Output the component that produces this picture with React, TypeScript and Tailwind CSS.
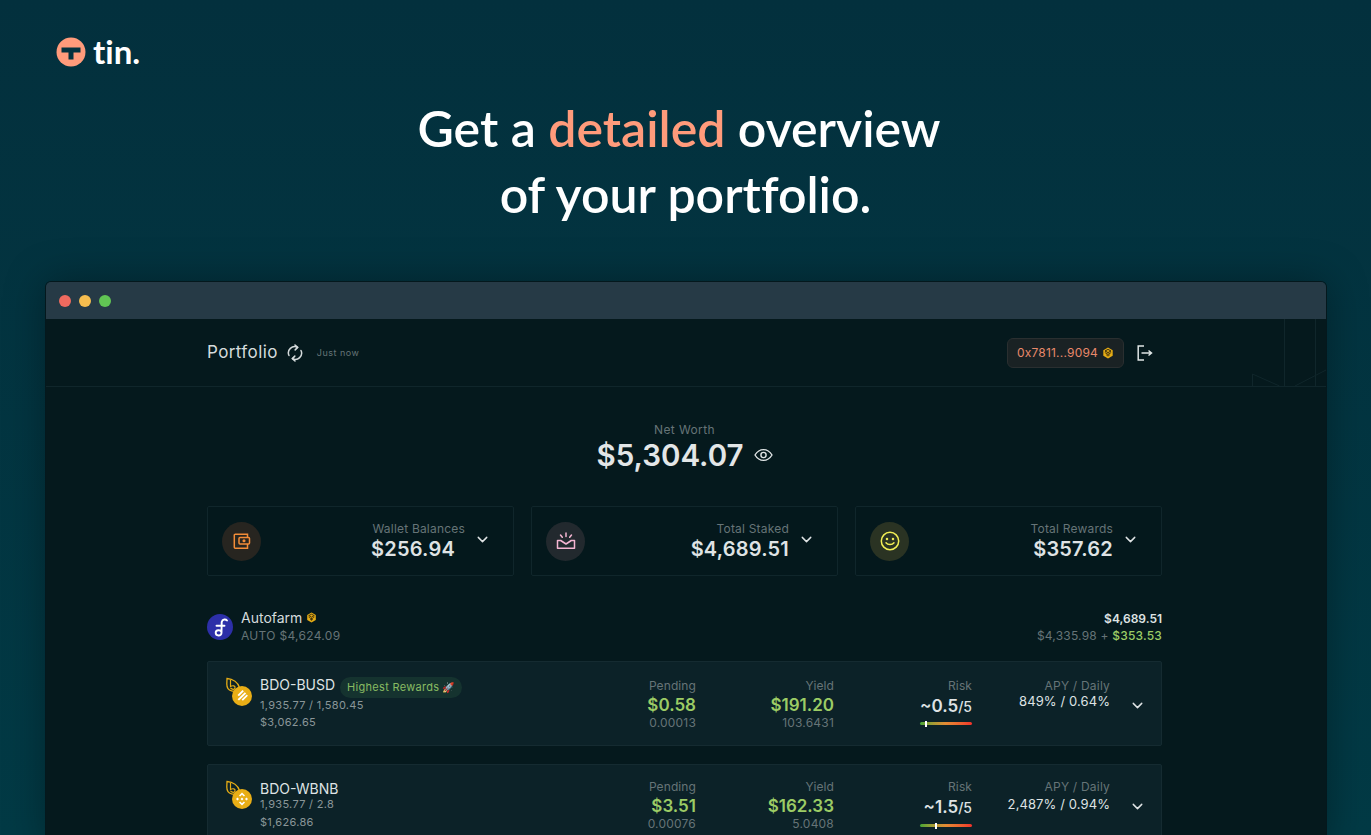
import { ChevronDown } from "lucide-react";

const inter = "font-['Inter',sans-serif]";

function Logo() {
  return (
    <div className="flex items-center gap-[7px]">
      <svg width="30" height="30" viewBox="0 0 30 30">
        <circle cx="15" cy="15" r="14.5" fill="#ff9b7b" />
        <path d="M5.5 10.5h19v5h-7v7h-5v-7h-7z" fill="#03323f" />
      </svg>
      <span className="font-['Lato',sans-serif] text-[33px] font-bold leading-none text-white [font-variant-ligatures:none]">tin.</span>
    </div>
  );
}

function BnbBadge({ size = 12 }: { size?: number }) {
  return (
    <svg width={size} height={size} viewBox="0 0 12 12" fill="none">
      <path d="M6 .6l4.7 2.7v5.4L6 11.4 1.3 8.7V3.3z" fill="#e5ac15" />
      <path d="M3 4l3-1.6L9 4 6 5.6zM6 6.4v3" stroke="#3a2c0a" strokeWidth="1" />
      <path d="M2.8 5.5L5 6.8v2M9.2 5.5L7 6.8v2" stroke="#3a2c0a" strokeWidth=".8" />
    </svg>
  );
}

function Refresh() {
  return (
    <svg width="16" height="18" viewBox="0 0 16 18" fill="none" stroke="#d5dbdc" strokeWidth="1.5" strokeLinecap="round" strokeLinejoin="round">
      <path d="M2 11.5A6.2 6.2 0 0 1 10.5 3.4" />
      <path d="M8 1l2.7 2.4L8.2 5.9" />
      <path d="M14 6.5A6.2 6.2 0 0 1 5.5 14.6" />
      <path d="M8 17l-2.7-2.4 2.5-2.5" />
    </svg>
  );
}

function Logout() {
  return (
    <svg width="16" height="16" viewBox="0 0 16 16" fill="none" stroke="#dfe5e5" strokeWidth="1.5">
      <path d="M7 1H1.2v14H7" />
      <path d="M4.5 8h10M11.5 5.5L14.5 8l-3 2.5" />
    </svg>
  );
}

function Eye() {
  return (
    <svg width="19" height="14" viewBox="0 0 19 14" fill="none" stroke="#dfe3e4" strokeWidth="1.4">
      <path d="M1 7c2.2-3.6 5-5.4 8.500-5.400S15.800 3.400 18 7c-2.200 3.600-5 5.400-8.500 5.400S3.200 10.600 1 7z" />
      <circle cx="9.500" cy="7" r="2.600" />
    </svg>
  );
}

function WalletIcon() {
  return (
    <svg width="18" height="18" viewBox="0 0 18 18" fill="none" stroke="#f28c38" strokeWidth="1.5">
      <path d="M14.500 5V2.200H2.200a.900.900 0 0 0-.900.900v12.200c0 .6.400 1 1 1h12.200V12" />
      <rect x="6" y="5.500" width="10.500" height="6.500" rx="1" />
      <circle cx="11" cy="8.700" r=".8" fill="#f28c38" />
    </svg>
  );
}

function StakeIcon() {
  return (
    <svg width="20" height="18" viewBox="0 0 20 18" fill="none" stroke="#f5b5d2" strokeWidth="1.500" strokeLinecap="round">
      <path d="M10 1v3.500M4.500 3l1.800 2.300M15.500 3l-1.800 2.300" />
      <path d="M1.500 8.500h3.200L10 12l5.300-3.500h3.200v7.700h-17z" strokeLinejoin="round" />
    </svg>
  );
}

function SmileIcon() {
  return (
    <svg width="20" height="20" viewBox="0 0 20 20" fill="none" stroke="#f1ee55" strokeWidth="1.500" strokeLinecap="round">
      <circle cx="10" cy="10" r="8.700" />
      <path d="M6 11.800c1.800 2.400 6.200 2.400 8 0" />
      <circle cx="7" cy="8" r=".5" fill="#f1ee55" />
      <circle cx="13" cy="8" r=".5" fill="#f1ee55" />
    </svg>
  );
}

function AutofarmLogo() {
  return (
    <svg width="26" height="26" viewBox="0 0 26 26">
      <circle cx="13" cy="13" r="13" fill="#2d2fa8" />
      <path d="M20 6.500c-1-1.300-4.500-1.800-5.300 1.500l-.2 11c-.3 3.400-5.800 3.300-5.800-.2 0-3.300 5-3.500 5.800-.5M9.500 11.700h8" fill="none" stroke="#fff" strokeWidth="1.900" strokeLinecap="round" />
    </svg>
  );
}

function FarmIcon({ coin }: { coin: "busd" | "bnb" }) {
  return (
    <div className="relative h-[30px] w-[28px] shrink-0">
      <svg width="28" height="30" viewBox="0 0 28 30" fill="none">
        <path d="M2 1.500C8 2 13 5.500 14.500 10.500c-1.800 3-5 4-8 3.300C2.800 13 1.800 10 1.800 7z" stroke="#e5ac15" strokeWidth="1.300" />
        <path d="M5.500 3v6.500c2.500-1.500 5-.5 4.500 1.500s-3 1.500-4.500 0" stroke="#e5ac15" strokeWidth="1.200" />
      </svg>
      <svg className="absolute bottom-[1px] right-[1px]" width="20" height="20" viewBox="0 0 20 20">
        <circle cx="10" cy="10" r="10" fill="#e9ae16" />
        {coin === "busd" ? (
          <path d="M10.500 4l1.400 1.300-5 5L5.500 9zM12.800 6.200l1.400 1.400-7.200 7-1.400-1.400zM14.800 8.500l1.100 1.300-5 5-1.300-1.400z" fill="#fff" />
        ) : (
          <path d="M10 3.500l3 3-1.100 1.100L10 5.700 8.100 7.600 7 6.500zM5.500 8.500L7 10l-1.500 1.500L4 10zM14.500 8.500L16 10l-1.500 1.500L13 10zM10 8.500l1.500 1.500L10 11.500 8.500 10zM7 13.500l1.100-1.100 1.900 1.900 1.900-1.900 1.100 1.100-3 3z" fill="#fff" />
        )}
      </svg>
    </div>
  );
}

function SummaryCard({ label, value, tint, icon, valueClass = "" }: { label: string; value: string; tint: string; icon: React.ReactNode; valueClass?: string }) {
  return (
    <div className="flex h-[70px] items-center rounded-[2px] border border-[#10262b] bg-[#04181c] pl-[14px] pr-[22px]">
      <div className={`flex h-[39px] w-[39px] items-center justify-center rounded-full ${tint}`}>{icon}</div>
      <div className="ml-auto mr-[9px] text-right">
        <div className="text-[12px] leading-[15px] tracking-[0.2px] text-[#667477]">{label}</div>
        <div className={`text-[20px] font-semibold leading-[26px] tracking-[0.2px] text-[#dfe3e4] ${valueClass}`}>{value}</div>
      </div>
      <ChevronDown size={17} strokeWidth={2} className="mb-[4px] text-[#dfe3e4]" />
    </div>
  );
}

function Metric({ label, value, sub, width }: { label: string; value: string; sub: string; width: string }) {
  return (
    <div className={`${width} text-right`}>
      <div className="text-[12px] leading-[14px] tracking-[0.1px] text-[#667477]">{label}</div>
      <div className="mt-[1px] text-[17px] font-semibold leading-[22px] text-[#9ccc65]">{value}</div>
      <div className="text-[12px] leading-[14px] tracking-[0.2px] text-[#667477]">{sub}</div>
    </div>
  );
}

type Farm = {
  name: string;
  coin: "busd" | "bnb";
  amounts: string;
  usd: string;
  pending: string;
  pendingSub: string;
  yieldValue: string;
  yieldSub: string;
  risk: string;
  riskPos: number;
  apy: string;
  badge?: boolean;
};

const farms: Farm[] = [
  { name: "BDO-BUSD", coin: "busd", amounts: "1,935.77 / 1,580.45", usd: "$3,062.65", pending: "$0.58", pendingSub: "0.00013", yieldValue: "$191.20", yieldSub: "103.6431", risk: "~0.5", riskPos: 5, apy: "849% / 0.64%", badge: true },
  { name: "BDO-WBNB", coin: "bnb", amounts: "1,935.77 / 2.8", usd: "$1,626.86", pending: "$3.51", pendingSub: "0.00076", yieldValue: "$162.33", yieldSub: "5.0408", risk: "~1.5", riskPos: 15, apy: "2,487% / 0.94%" },
];

function FarmRow({ farm }: { farm: Farm }) {
  return (
    <div className="flex h-[85px] rounded-[2px] border border-[#152b31] bg-[#0c2228] pl-[17px] pt-[15px]">
      <FarmIcon coin={farm.coin} />
      <div className="ml-[7px] w-[340px]">
        <div className={`flex items-center ${farm.badge ? "-mt-[3px] h-[21px]" : "h-[17px]"}`}>
          <span className="text-[14px] leading-[17px] text-[#dfe3e4]">{farm.name}</span>
          {farm.badge && (
            <span className="ml-[5px] mt-[5px] flex h-[21px] items-center gap-[3px] rounded-full bg-[#15332f] px-[7px] text-[11px] tracking-[0.3px] text-[#88bb62]">
              Highest Rewards <span className="text-[10px]">🚀</span>
            </span>
          )}
        </div>
        <div className={`text-[11px] leading-[14px] tracking-[0.3px] text-[#8a9698] ${farm.badge ? "mt-[3px]" : ""}`}>{farm.amounts}</div>
        <div className={`text-[11px] leading-[15px] tracking-[0.3px] text-[#8a9698] ${farm.badge ? "mt-[3px]" : "mt-[4px]"}`}>{farm.usd}</div>
      </div>
      <div className={`flex ${farm.badge ? "pt-[2px]" : ""}`}>
        <Metric label="Pending" value={farm.pending} sub={farm.pendingSub} width="w-[96px]" />
        <Metric label="Yield" value={farm.yieldValue} sub={farm.yieldSub} width="w-[138px]" />
        <div className="w-[138px] text-right">
          <div className="text-[12px] leading-[14px] tracking-[0.1px] text-[#667477]">Risk</div>
          <div className="mt-[1px] text-[#dfe3e4]">
            <span className="text-[17px] font-semibold leading-[22px]">{farm.risk}</span>
            <span className="text-[14px] font-medium leading-[22px]">/5</span>
          </div>
          <div className={`relative ml-auto h-[3px] w-[52px] rounded-full bg-gradient-to-r from-[#3fa535] via-[#e58a34] to-[#f0302a] ${farm.badge ? "mt-[4px]" : "mt-[5px]"}`}>
            <div className="absolute -top-[1px] h-[6px] w-[2px] bg-white" style={{ left: farm.riskPos }} />
          </div>
        </div>
        <div className="w-[138px] text-right">
          <div className="text-[12px] leading-[14px] tracking-[0.2px] text-[#667477]">APY / Daily</div>
          <div className={`text-[13px] leading-[21px] tracking-[0.1px] text-[#dfe3e4] ${farm.badge ? "-mt-[2px]" : ""}`}>{farm.apy}</div>
        </div>
        <ChevronDown size={17} strokeWidth={2} className="ml-[19px] mt-[18px] text-[#dfe3e4]" />
      </div>
    </div>
  );
}

export default function App() {
  return (
    <div className={`h-[835px] overflow-hidden bg-gradient-to-b from-[#03303d] to-[#023a45] antialiased ${inter}`}>
      <div className="pl-[56px] pt-[35px]">
        <Logo />
      </div>
      <h1 className="mt-[27px] text-center font-['Lato',sans-serif] text-[50px] font-semibold leading-[66px] text-white [font-variant-ligatures:none]">
        <div className="pr-[13px]">
          Get a <span className="text-[#ff9b7b]">detailed</span> overview
        </div>
        <div>of your portfolio.</div>
      </h1>

      <div className="ml-[46px] mt-[55px] w-[1280px] overflow-hidden rounded-t-[5px] shadow-[0_0_40px_rgba(0,0,0,0.35)] ring-1 ring-[#04181d]">
        <div className="flex h-[37px] items-center gap-[8px] bg-[#263a46] pl-[13px]">
          <span className="h-[12px] w-[12px] rounded-full bg-[#ee6a5f]" />
          <span className="h-[12px] w-[12px] rounded-full bg-[#f5bd4f]" />
          <span className="h-[12px] w-[12px] rounded-full bg-[#61c554]" />
        </div>
        <div className="bg-[#05191d]">
          <header className="relative flex h-[68px] items-center border-b border-[#10262b] pl-[161px] pr-[173px]">
            <span className="mt-[1px] text-[17px] tracking-[0.4px] text-[#d5dbdc]">Portfolio</span>
            <span className="ml-[9px] mt-[1px]"><Refresh /></span>
            <span className="ml-[14px] text-[9px] tracking-[0.5px] text-[#667477]">Just now</span>
            <div className="ml-auto flex h-[30px] items-center gap-[4px] rounded-[6px] border border-[#2a2f30] bg-[#1a2224] px-[9px] text-[12px] tracking-[0.2px] text-[#e8896b]">
              0x7811...9094 <BnbBadge />
            </div>
            <span className="ml-[13px]"><Logout /></span>
            <svg className="absolute bottom-0 right-0" width="74" height="67" viewBox="0 0 74 67" fill="none" stroke="#10262b">
              <path d="M32.500 0v67M63.500 0v67M0.500 67V55l27 12M43 67l31-16" />
            </svg>
          </header>
          <main className="pl-[161px] pr-[164px] pt-[36px]">
            <div className="text-center">
              <div className="text-[12px] leading-[14px] tracking-[0.4px] text-[#667477]">Net Worth</div>
              <div className="flex items-center justify-center gap-[10px]">
                <span className="text-[29.5px] font-semibold leading-[36px] text-[#e3e6e7]">$5,304.07</span>
                <Eye />
              </div>
            </div>
            <div className="mt-[33px] grid grid-cols-3 gap-[17px]">
              <SummaryCard label="Wallet Balances" value="$256.94" valueClass="pr-[10px]" tint="bg-[#272520]" icon={<WalletIcon />} />
              <SummaryCard label="Total Staked" value="$4,689.51" tint="bg-[#22292e]" icon={<StakeIcon />} />
              <SummaryCard label="Total Rewards" value="$357.62" tint="bg-[#2a3323]" icon={<SmileIcon />} />
            </div>
            <div className="mt-[34px] flex h-[34px] items-center">
              <AutofarmLogo />
              <div className="mb-[2px] ml-[8px]">
                <div className="mb-[2px] flex items-center gap-[4px] text-[14px] leading-[17px] text-[#d5dbdc]">
                  Autofarm <BnbBadge size={11} />
                </div>
                <div className="text-[12px] leading-[15px] tracking-[0.3px] text-[#667477]">AUTO $4,624.09</div>
              </div>
              <div className="ml-auto text-right text-[12px] leading-[17px]">
                <div className="font-semibold text-[#dfe3e4]">$4,689.51</div>
                <div className="tracking-[0.2px] text-[#667477]">
                  $4,335.98 + <span className="font-medium text-[#9ccc65]">$353.53</span>
                </div>
              </div>
            </div>
            <div className="mt-[17px] flex flex-col gap-[18px]">
              {farms.map((farm) => (
                <FarmRow key={farm.name} farm={farm} />
              ))}
            </div>
          </main>
        </div>
      </div>
    </div>
  );
}
